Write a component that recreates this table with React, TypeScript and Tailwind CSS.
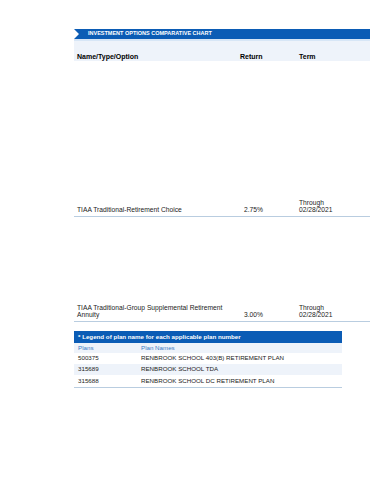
import React from "react";

export default function App() {
  const font = { fontFamily: '"Liberation Sans", Arial, sans-serif' };
  return (
    <div className="w-[370px] h-[480px] overflow-hidden bg-white" style={font}>
      <div className="pt-[29px] pl-[74px] w-[400px]">
        <div
          className="h-[10px] bg-[#0b5cb5] flex items-center pl-[14px] text-white font-bold text-[5.5px] leading-none"
          style={{ clipPath: "polygon(0 0,100% 0,100% 100%,0 100%,5px 50%)" }}
        >
          INVESTMENT OPTIONS COMPARATIVE CHART
        </div>
        <div className="h-[2px] bg-[#d7e6f6]" />
        <div className="h-[20px] bg-[#eef3fa] flex items-end pb-[1px] text-[7px] font-bold text-black leading-none">
          <div className="w-[166px] pl-[3px]">Name/Type/Option</div>
          <div className="w-[59px]">Return</div>
          <div>Term</div>
        </div>
        <div className="h-[156px] flex items-end pb-[3px] border-b border-[#b9cde0] text-[6.7px] text-[#222] leading-[7px]">
          <div className="w-[170px] pl-[3px]">TIAA Traditional-Retirement Choice</div>
          <div className="w-[55px]">2.75%</div>
          <div>
            <div>Through</div>
            <div>02/28/2021</div>
          </div>
        </div>
        <div className="h-[105px] flex items-end pb-[3px] border-b border-[#b9cde0] text-[6.7px] text-[#222] leading-[7px]">
          <div className="w-[170px] pl-[3px]">
            <div>TIAA Traditional-Group Supplemental Retirement</div>
            <div>Annuity</div>
          </div>
          <div className="w-[55px]">3.00%</div>
          <div>
            <div>Through</div>
            <div>02/28/2021</div>
          </div>
        </div>
        <div className="mt-[9px] w-[268px] border-b border-[#b9cde0] text-[6.2px] leading-none">
          <div className="h-[12px] bg-[#0b5cb5] flex items-center pl-[4px] text-white font-bold">
            * Legend of plan name for each applicable plan number
          </div>
          <div className="h-[10px] bg-[#eef3fa] flex items-center pl-[4px] text-[#3d7cc4]">
            <div className="w-[63px]">Plans</div>
            <div>Plan Names</div>
          </div>
          <div className="h-[11px] flex items-center pl-[4px] text-[#222]">
            <div className="w-[63px]">500375</div>
            <div>RENBROOK SCHOOL 403(B) RETIREMENT PLAN</div>
          </div>
          <div className="h-[11px] bg-[#eef3fa] flex items-center pl-[4px] text-[#222]">
            <div className="w-[63px]">315689</div>
            <div>RENBROOK SCHOOL TDA</div>
          </div>
          <div className="h-[12px] flex items-center pl-[4px] text-[#222]">
            <div className="w-[63px]">315688</div>
            <div>RENBROOK SCHOOL DC RETIREMENT PLAN</div>
          </div>
        </div>
      </div>
    </div>
  );
}
